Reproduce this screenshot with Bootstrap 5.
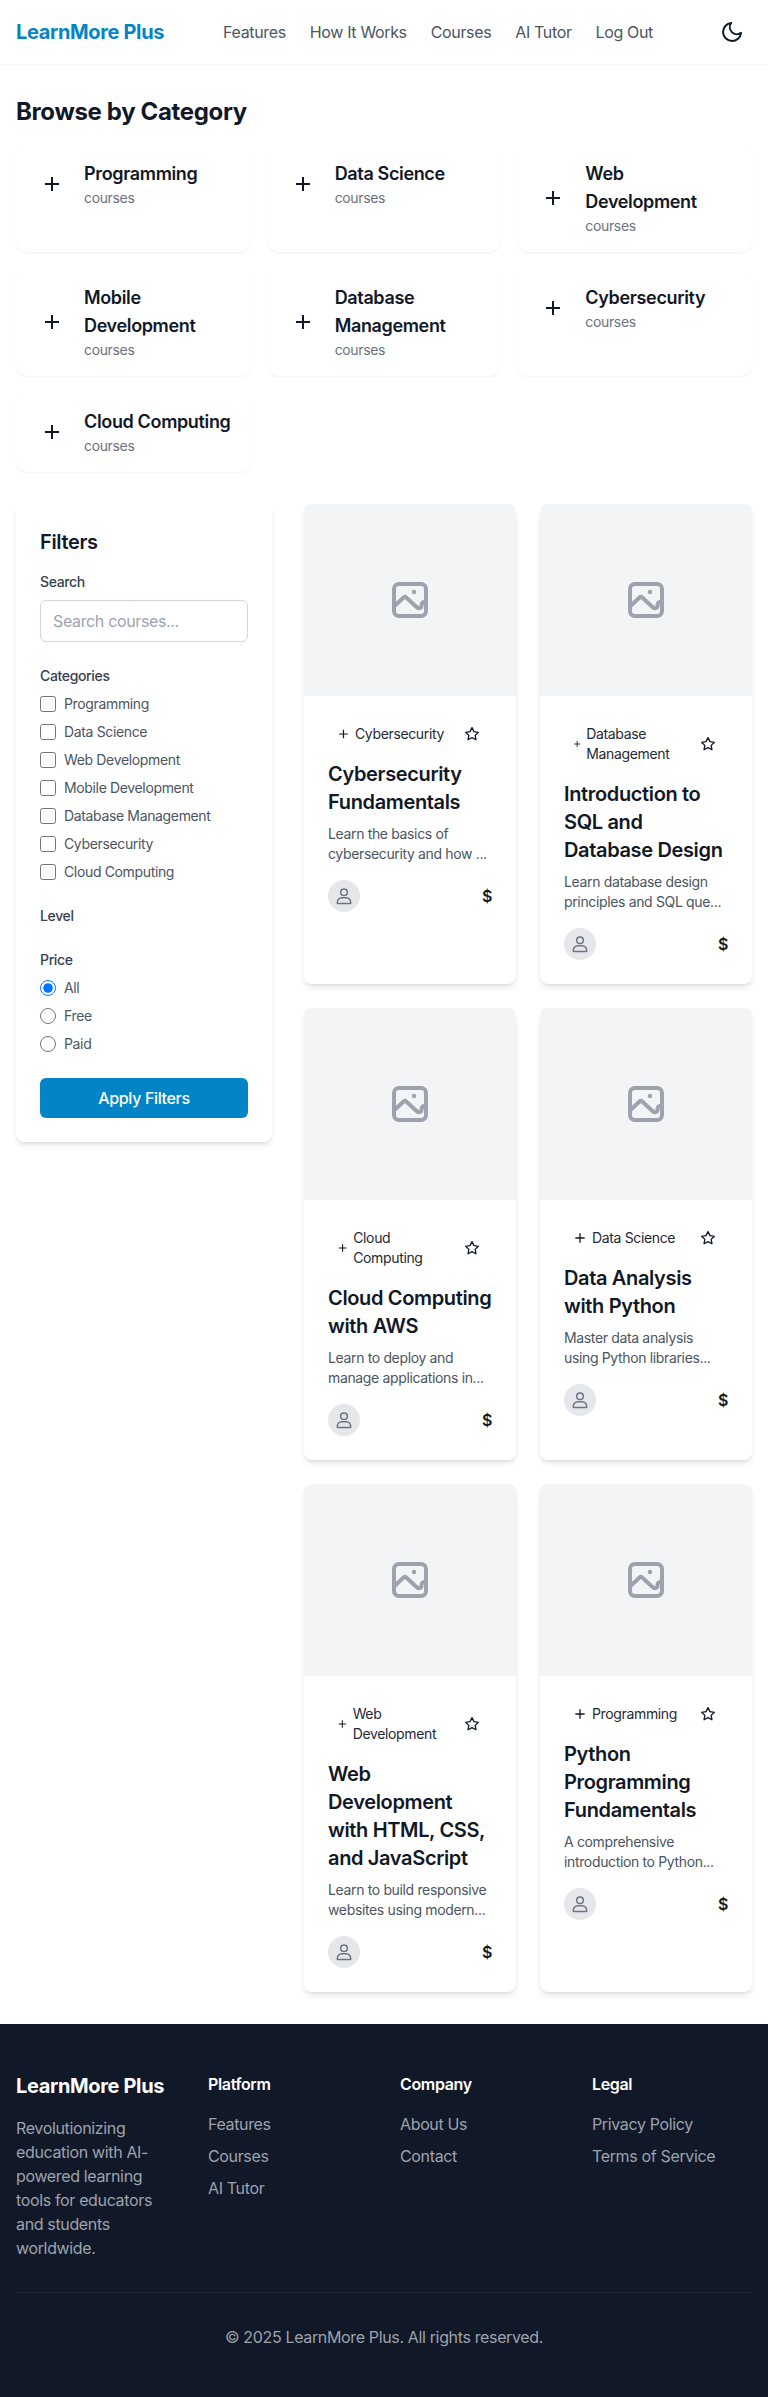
<!DOCTYPE html>
<html lang="en">
<head>
<meta charset="utf-8">
<title>LearnMore Plus</title>
<link rel="stylesheet" href="https://cdn.jsdelivr.net/npm/bootstrap@5.3.0/dist/css/bootstrap.min.css">
<style>
body{font-family:Inter,"Liberation Sans",sans-serif;color:#111827;background:#fff;font-size:16px;line-height:24px;letter-spacing:-.022em}
input,button{letter-spacing:-.022em}
.top-bar{height:64px;padding:0 16px;background:#fff;box-shadow:0 1px 2px rgba(0,0,0,.05)}
.brand-name{font-size:20px;line-height:28px;font-weight:700;color:#0284c7;padding:0;margin:0}
.top-links{gap:24px}
.navbar-expand.top-bar .top-links .nav-link{padding:0;color:#4b5563;font-size:16px;line-height:24px}
.theme-btn{width:40px;height:40px;padding:0;border:0;background:none;color:#111827}
.page-main{padding:32px 16px}
.page-title{font-size:24px;line-height:32px;font-weight:700;margin:0 0 16px;color:#111827}
.cat-tile{border:0;border-radius:12px;padding:16px;box-shadow:0 1px 2px rgba(0,0,0,.06)}
.cat-icon{width:40px;height:40px;flex:none;margin-right:12px;color:#111827}
.cat-name{font-size:18px;line-height:28px;font-weight:600;color:#111827}
.cat-count{font-size:14px;line-height:20px;color:#6b7280}
.browse-grid{margin-bottom:32px}
.filter-col{width:256px;flex:none}
.filter-box{border:0;border-radius:8px;padding:24px;box-shadow:0 4px 6px -1px rgba(0,0,0,.1),0 2px 4px -2px rgba(0,0,0,.1)}
.filter-title{font-size:20px;line-height:28px;font-weight:600;margin:0 0 16px;color:#111827}
.field-label{display:block;font-size:14px;line-height:20px;font-weight:500;color:#374151;margin:0 0 8px}
.field-group{margin-bottom:24px}
.search-input{height:42px;border:1px solid #d1d5db;border-radius:6px;padding:8px 12px;font-size:16px;line-height:24px;box-shadow:none}
.search-input::placeholder{color:#9ca3af;opacity:1}
.choice{display:flex;align-items:center;gap:8px;font-size:14px;line-height:20px;color:#4b5563;margin-bottom:8px}
.choice:last-child{margin-bottom:0}
.choice input{width:16px;height:16px;margin:0;flex:none}
.apply-btn{height:40px;width:100%;background:#0284c7;border:0;border-radius:6px;color:#fff;font-weight:500;font-size:16px;line-height:24px;padding:8px 16px}
.course-col{gap:32px}
.course-main{min-width:0}
.course-box{border:0;border-radius:8px;overflow:hidden;box-shadow:0 4px 6px -1px rgba(0,0,0,.1),0 2px 4px -2px rgba(0,0,0,.1)}
.course-thumb{height:192px;background:#f3f4f6;color:#9ca3af}
.course-body{padding:24px}
.tag-row{margin-bottom:12px}
.tag-pill{display:flex;align-items:center;gap:4px;padding:4px 8px;min-width:0;font-size:14px;line-height:20px;color:#1f2937}
.tag-pill svg{width:16px;height:16px;flex:0 1 16px;min-width:0;color:#111827}
.star-btn{width:40px;height:16px;flex:none;padding:0;border:0;background:none;line-height:0;color:#111827}
.course-title{font-size:20px;line-height:28px;font-weight:600;color:#111827;margin:0 0 8px}
.course-desc{font-size:14px;line-height:20px;color:#4b5563;margin:0 0 16px}
.person{width:32px;height:32px;border-radius:50%;background:#e5e7eb;color:#6b7280}
.price-tag{font-weight:600;font-size:16px;line-height:24px;color:#111827}
.site-foot{background:#111827;color:#9ca3af;padding:48px 16px}
.foot-row{--bs-gutter-x:2rem}
.foot-brand{font-size:20px;line-height:28px;font-weight:700;color:#fff;margin:0 0 16px}
.foot-head{font-size:16px;line-height:24px;font-weight:600;color:#fff;margin:0 0 16px}
.foot-list li{margin-bottom:8px}
.foot-list a{color:#9ca3af;text-decoration:none}
.foot-text{margin:0}
.foot-bottom{margin-top:32px;padding-top:32px;border-top:1px solid #1f2937;text-align:center}
</style>
</head>
<body>
<svg width="0" height="0" class="d-block position-absolute">
  <symbol id="i-plus" viewBox="0 0 24 24"><path d="M12 5v14M5 12h14" fill="none" stroke="currentColor" stroke-width="2"/></symbol>
  <symbol id="i-star" viewBox="0 0 24 24"><path d="M12 2.500l2.950 6 6.550.95-4.750 4.600 1.120 6.550L12 17.500l-5.870 3.100 1.120-6.550L2.500 9.450l6.550-.95z" fill="none" stroke="currentColor" stroke-width="2" stroke-linejoin="round"/></symbol>
  <symbol id="i-image" viewBox="0 0 36 36"><g fill="none" stroke="currentColor" stroke-width="4" stroke-linecap="round" stroke-linejoin="round"><rect x="2" y="2" width="32" height="32" rx="5"/><path d="M2 24.500l9.500-9a2 2 0 0 1 2.700 0L24 24.500c2.500 2.500 5 2 5.500-.5.300-1.500-.5-3 2-4"/></g><circle cx="22" cy="10" r="2.200" fill="currentColor"/></symbol>
  <symbol id="i-user" viewBox="0 0 24 24"><g fill="none" stroke="currentColor" stroke-width="1.800"><circle cx="12" cy="7.500" r="4"/><path d="M4 21v-1.500a5.500 5.500 0 0 1 5.500-5.500h5a5.500 5.500 0 0 1 5.500 5.500V21z" stroke-linejoin="round"/></g></symbol>
</svg>

<nav class="navbar navbar-expand top-bar d-flex justify-content-between align-items-center flex-nowrap">
  <a class="brand-name text-decoration-none" href="#">LearnMore Plus</a>
  <div class="navbar-nav flex-row top-links">
    <a class="nav-link" href="#">Features</a>
    <a class="nav-link" href="#">How It Works</a>
    <a class="nav-link" href="#">Courses</a>
    <a class="nav-link" href="#">AI Tutor</a>
    <a class="nav-link" href="#">Log Out</a>
  </div>
  <button class="theme-btn d-flex align-items-center justify-content-center" type="button" aria-label="Toggle theme">
    <svg width="24" height="24" viewBox="0 0 24 24" fill="none" stroke="currentColor" stroke-width="2" stroke-linejoin="round"><path d="M21 12.790A9 9 0 1 1 11.210 3 7 7 0 0 0 21 12.790z"/></svg>
  </button>
</nav>

<main class="page-main">
  <h2 class="page-title">Browse by Category</h2>
  <div class="row row-cols-3 g-3 browse-grid">
    <div class="col"><div class="card cat-tile h-100"><div class="d-flex align-items-center"><div class="cat-icon d-flex align-items-center justify-content-center"><svg width="24" height="24"><use href="#i-plus"/></svg></div><div><div class="cat-name">Programming</div><div class="cat-count">courses</div></div></div></div></div>
    <div class="col"><div class="card cat-tile h-100"><div class="d-flex align-items-center"><div class="cat-icon d-flex align-items-center justify-content-center"><svg width="24" height="24"><use href="#i-plus"/></svg></div><div><div class="cat-name">Data Science</div><div class="cat-count">courses</div></div></div></div></div>
    <div class="col"><div class="card cat-tile h-100"><div class="d-flex align-items-center"><div class="cat-icon d-flex align-items-center justify-content-center"><svg width="24" height="24"><use href="#i-plus"/></svg></div><div><div class="cat-name">Web Development</div><div class="cat-count">courses</div></div></div></div></div>
    <div class="col"><div class="card cat-tile h-100"><div class="d-flex align-items-center"><div class="cat-icon d-flex align-items-center justify-content-center"><svg width="24" height="24"><use href="#i-plus"/></svg></div><div><div class="cat-name">Mobile Development</div><div class="cat-count">courses</div></div></div></div></div>
    <div class="col"><div class="card cat-tile h-100"><div class="d-flex align-items-center"><div class="cat-icon d-flex align-items-center justify-content-center"><svg width="24" height="24"><use href="#i-plus"/></svg></div><div><div class="cat-name">Database Management</div><div class="cat-count">courses</div></div></div></div></div>
    <div class="col"><div class="card cat-tile h-100"><div class="d-flex align-items-center"><div class="cat-icon d-flex align-items-center justify-content-center"><svg width="24" height="24"><use href="#i-plus"/></svg></div><div><div class="cat-name">Cybersecurity</div><div class="cat-count">courses</div></div></div></div></div>
    <div class="col"><div class="card cat-tile h-100"><div class="d-flex align-items-center"><div class="cat-icon d-flex align-items-center justify-content-center"><svg width="24" height="24"><use href="#i-plus"/></svg></div><div><div class="cat-name">Cloud Computing</div><div class="cat-count">courses</div></div></div></div></div>
  </div>

  <div class="d-flex align-items-start course-col">
    <aside class="filter-col">
      <div class="card filter-box">
        <h3 class="filter-title">Filters</h3>
        <div class="field-group">
          <label class="field-label" for="q">Search</label>
          <input id="q" class="form-control search-input" type="text" placeholder="Search courses...">
        </div>
        <div class="field-group">
          <div class="field-label">Categories</div>
          <label class="choice"><input type="checkbox">Programming</label>
          <label class="choice"><input type="checkbox">Data Science</label>
          <label class="choice"><input type="checkbox">Web Development</label>
          <label class="choice"><input type="checkbox">Mobile Development</label>
          <label class="choice"><input type="checkbox">Database Management</label>
          <label class="choice"><input type="checkbox">Cybersecurity</label>
          <label class="choice"><input type="checkbox">Cloud Computing</label>
        </div>
        <div class="field-group">
          <div class="field-label mb-0">Level</div>
        </div>
        <div class="field-group">
          <div class="field-label">Price</div>
          <label class="choice"><input type="radio" name="price" checked>All</label>
          <label class="choice"><input type="radio" name="price">Free</label>
          <label class="choice"><input type="radio" name="price">Paid</label>
        </div>
        <button class="apply-btn" type="button">Apply Filters</button>
      </div>
    </aside>

    <div class="flex-grow-1 course-main">
      <div class="row row-cols-2 g-4">
        <div class="col"><div class="card course-box h-100">
          <div class="course-thumb d-flex align-items-center justify-content-center"><svg width="36" height="36"><use href="#i-image"/></svg></div>
          <div class="course-body">
            <div class="d-flex justify-content-between align-items-center tag-row"><div class="tag-pill"><svg><use href="#i-plus"/></svg><span>Cybersecurity</span></div><button class="star-btn" type="button" aria-label="Favourite"><svg width="16" height="16"><use href="#i-star"/></svg></button></div>
            <h3 class="course-title">Cybersecurity Fundamentals</h3>
            <p class="course-desc">Learn the basics of cybersecurity and how ...</p>
            <div class="d-flex justify-content-between align-items-center"><div class="person d-flex align-items-center justify-content-center"><svg width="20" height="20"><use href="#i-user"/></svg></div><span class="price-tag">$</span></div>
          </div>
        </div></div>
        <div class="col"><div class="card course-box h-100">
          <div class="course-thumb d-flex align-items-center justify-content-center"><svg width="36" height="36"><use href="#i-image"/></svg></div>
          <div class="course-body">
            <div class="d-flex justify-content-between align-items-center tag-row"><div class="tag-pill"><svg><use href="#i-plus"/></svg><span>Database Management</span></div><button class="star-btn" type="button" aria-label="Favourite"><svg width="16" height="16"><use href="#i-star"/></svg></button></div>
            <h3 class="course-title">Introduction to SQL and Database Design</h3>
            <p class="course-desc">Learn database design principles and SQL que...</p>
            <div class="d-flex justify-content-between align-items-center"><div class="person d-flex align-items-center justify-content-center"><svg width="20" height="20"><use href="#i-user"/></svg></div><span class="price-tag">$</span></div>
          </div>
        </div></div>
        <div class="col"><div class="card course-box h-100">
          <div class="course-thumb d-flex align-items-center justify-content-center"><svg width="36" height="36"><use href="#i-image"/></svg></div>
          <div class="course-body">
            <div class="d-flex justify-content-between align-items-center tag-row"><div class="tag-pill"><svg><use href="#i-plus"/></svg><span>Cloud Computing</span></div><button class="star-btn" type="button" aria-label="Favourite"><svg width="16" height="16"><use href="#i-star"/></svg></button></div>
            <h3 class="course-title">Cloud Computing with AWS</h3>
            <p class="course-desc">Learn to deploy and manage applications in...</p>
            <div class="d-flex justify-content-between align-items-center"><div class="person d-flex align-items-center justify-content-center"><svg width="20" height="20"><use href="#i-user"/></svg></div><span class="price-tag">$</span></div>
          </div>
        </div></div>
        <div class="col"><div class="card course-box h-100">
          <div class="course-thumb d-flex align-items-center justify-content-center"><svg width="36" height="36"><use href="#i-image"/></svg></div>
          <div class="course-body">
            <div class="d-flex justify-content-between align-items-center tag-row"><div class="tag-pill"><svg><use href="#i-plus"/></svg><span>Data Science</span></div><button class="star-btn" type="button" aria-label="Favourite"><svg width="16" height="16"><use href="#i-star"/></svg></button></div>
            <h3 class="course-title">Data Analysis with Python</h3>
            <p class="course-desc">Master data analysis using Python libraries...</p>
            <div class="d-flex justify-content-between align-items-center"><div class="person d-flex align-items-center justify-content-center"><svg width="20" height="20"><use href="#i-user"/></svg></div><span class="price-tag">$</span></div>
          </div>
        </div></div>
        <div class="col"><div class="card course-box h-100">
          <div class="course-thumb d-flex align-items-center justify-content-center"><svg width="36" height="36"><use href="#i-image"/></svg></div>
          <div class="course-body">
            <div class="d-flex justify-content-between align-items-center tag-row"><div class="tag-pill"><svg><use href="#i-plus"/></svg><span>Web Development</span></div><button class="star-btn" type="button" aria-label="Favourite"><svg width="16" height="16"><use href="#i-star"/></svg></button></div>
            <h3 class="course-title">Web Development with HTML, CSS, and JavaScript</h3>
            <p class="course-desc">Learn to build responsive websites using modern...</p>
            <div class="d-flex justify-content-between align-items-center"><div class="person d-flex align-items-center justify-content-center"><svg width="20" height="20"><use href="#i-user"/></svg></div><span class="price-tag">$</span></div>
          </div>
        </div></div>
        <div class="col"><div class="card course-box h-100">
          <div class="course-thumb d-flex align-items-center justify-content-center"><svg width="36" height="36"><use href="#i-image"/></svg></div>
          <div class="course-body">
            <div class="d-flex justify-content-between align-items-center tag-row"><div class="tag-pill"><svg><use href="#i-plus"/></svg><span>Programming</span></div><button class="star-btn" type="button" aria-label="Favourite"><svg width="16" height="16"><use href="#i-star"/></svg></button></div>
            <h3 class="course-title">Python Programming Fundamentals</h3>
            <p class="course-desc">A comprehensive introduction to Python...</p>
            <div class="d-flex justify-content-between align-items-center"><div class="person d-flex align-items-center justify-content-center"><svg width="20" height="20"><use href="#i-user"/></svg></div><span class="price-tag">$</span></div>
          </div>
        </div></div>
      </div>
    </div>
  </div>
</main>

<footer class="site-foot">
  <div class="row foot-row">
    <div class="col-3">
      <div class="foot-brand">LearnMore Plus</div>
      <p class="foot-text">Revolutionizing education with AI-powered learning tools for educators and students worldwide.</p>
    </div>
    <div class="col-3">
      <div class="foot-head">Platform</div>
      <ul class="list-unstyled foot-list m-0"><li><a href="#">Features</a></li><li><a href="#">Courses</a></li><li><a href="#">AI Tutor</a></li></ul>
    </div>
    <div class="col-3">
      <div class="foot-head">Company</div>
      <ul class="list-unstyled foot-list m-0"><li><a href="#">About Us</a></li><li><a href="#">Contact</a></li></ul>
    </div>
    <div class="col-3">
      <div class="foot-head">Legal</div>
      <ul class="list-unstyled foot-list m-0"><li><a href="#">Privacy Policy</a></li><li><a href="#">Terms of Service</a></li></ul>
    </div>
  </div>
  <div class="foot-bottom">© 2025 LearnMore Plus. All rights reserved.</div>
</footer>
<script src="https://cdn.jsdelivr.net/npm/bootstrap@5.3.0/dist/js/bootstrap.bundle.min.js"></script>
</body>
</html>
